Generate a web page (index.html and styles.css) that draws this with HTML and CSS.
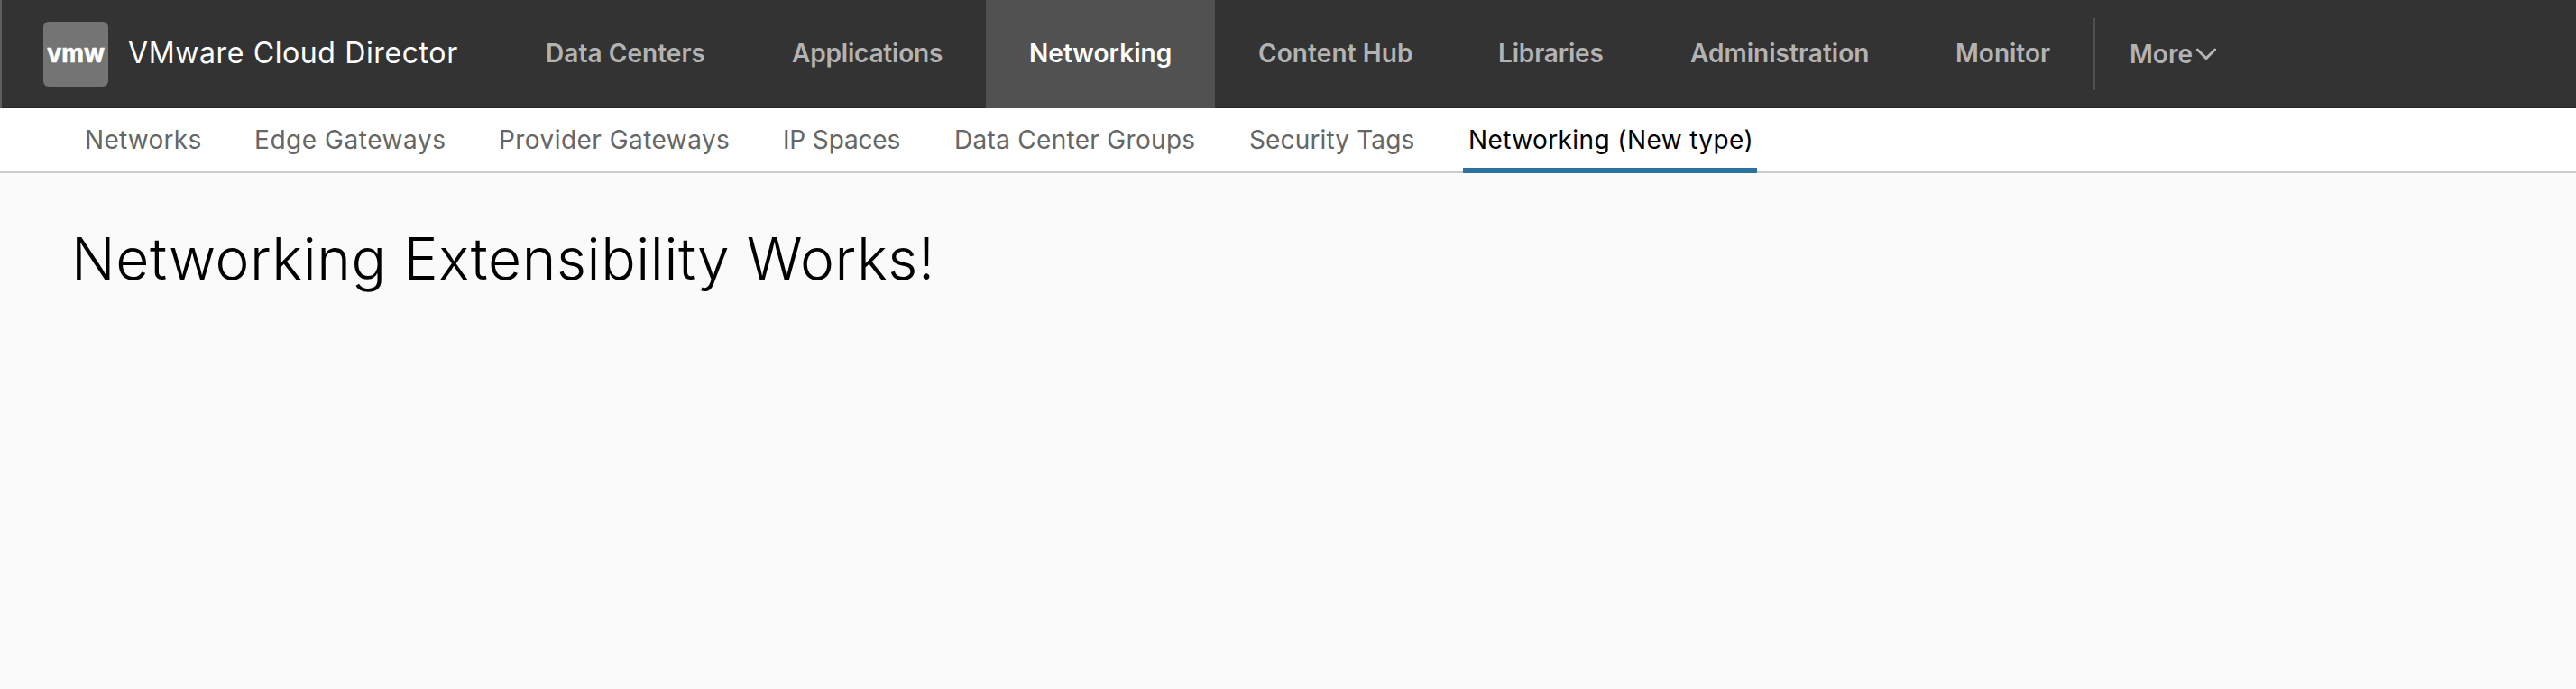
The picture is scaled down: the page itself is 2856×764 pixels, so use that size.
FILE: index.html
```html
<!DOCTYPE html>
<html lang="en">
<head>
<meta charset="utf-8">
<title>VMware Cloud Director</title>
<link rel="stylesheet" href="styles.css">
</head>
<body>
<header class="header">
  <a class="branding">
    <svg class="logo" viewBox="0 0 72 72" aria-hidden="true">
      <rect width="72" height="72" rx="6" fill="#747474"/>
      <text class="logo-text" x="4" y="44.6" textLength="64" lengthAdjust="spacingAndGlyphs">vmw</text>
    </svg>
    <span class="title">VMware Cloud Director</span>
  </a>
  <nav class="main-nav">
    <a class="nav-link data-centers">Data Centers</a>
    <a class="nav-link applications">Applications</a>
    <a class="nav-link networking active">Networking</a>
    <a class="nav-link content-hub">Content Hub</a>
    <a class="nav-link libraries">Libraries</a>
    <a class="nav-link administration">Administration</a>
    <a class="nav-link monitor">Monitor</a>
  </nav>
  <div class="more">
    <span>More</span>
    <svg class="chevron" viewBox="0 0 24 16" aria-hidden="true"><path d="M2.3 3 L12 12.6 L21.7 3"/></svg>
  </div>
</header>
<nav class="subnav">
  <a class="sub-link networks">Networks</a>
  <a class="sub-link edge">Edge Gateways</a>
  <a class="sub-link provider">Provider Gateways</a>
  <a class="sub-link ip-spaces">IP Spaces</a>
  <a class="sub-link groups">Data Center Groups</a>
  <a class="sub-link tags">Security Tags</a>
  <a class="sub-link new-type selected">Networking (New type)</a>
</nav>
<main class="content">
  <h1 class="heading">Networking Extensibility Works!</h1>
</main>
</body>
</html>
```
FILE: styles.css
```css
* { box-sizing: border-box; }
body {
  margin: 0;
  min-height: 764px;
  background: #fafafa;
  color: #000;
  font-family: Inter, "Liberation Sans", sans-serif;
  font-size: 28px;
  white-space: nowrap;
}

.header {
  display: flex;
  height: 120px;
  background: #333;
  border-left: 2px solid #5e5e5e;
  box-shadow: inset 0 -1px #2c292b;
}
.branding {
  display: flex;
  align-items: center;
  width: 555px;
  padding-left: 46px;
}
.logo { width: 72px; height: 72px; margin-right: 22px; flex: none; }
.logo-text {
  font-size: 29px;
  font-weight: 700;
  fill: #fff;
  stroke: #fff;
  stroke-width: 0.6;
  stroke-linejoin: round;
}
.title {
  color: #fff;
  font-size: 32px;
  line-height: 118px;
  padding-bottom: 2px;
  letter-spacing: 0.62px;
}

.main-nav { display: flex; }
.nav-link {
  padding-left: 48px;
  color: #b3b3b3;
  font-weight: 600;
  line-height: 119px;
}
.nav-link.active { background: #515151; color: #fff; }
.data-centers { width: 273px; letter-spacing: 0.05px; }
.applications { width: 263px; letter-spacing: -0.184px; }
.networking { width: 254px; letter-spacing: 0.05px; }
.content-hub { width: 266px; letter-spacing: 0.093px; }
.libraries { width: 213px; letter-spacing: -0.167px; }
.administration { width: 294px; letter-spacing: 0.032px; }
.monitor { width: 201px; }

.more {
  display: flex;
  align-items: center;
  height: 80px;
  margin-top: 20px;
  padding-left: 38px;
  border-left: 2px solid #515151;
  color: #b3b3b3;
  font-weight: 600;
  line-height: 78px;
}
.more span { padding-bottom: 1px; }
.chevron { width: 24px; height: 16px; margin-left: 3px; }
.chevron path {
  fill: none;
  stroke: #b3b3b3;
  stroke-width: 3;
  stroke-linecap: round;
}

.subnav {
  display: flex;
  gap: 48px;
  height: 72px;
  padding-left: 88px;
  background: #fff;
  box-shadow: inset 0 -2px #ccc;
}
.sub-link {
  padding-left: 6px;
  color: #666;
  line-height: 71px;
}
.sub-link.selected { color: #000; box-shadow: inset 0 -6px #2d719f; }
.networks { width: 140px; letter-spacing: 0.281px; }
.edge { width: 223px; letter-spacing: 0.55px; }
.provider { width: 267px; letter-spacing: 0.45px; }
.ip-spaces { width: 142px; letter-spacing: -0.15px; }
.groups { width: 279px; letter-spacing: 0.3px; }
.tags { width: 195px; letter-spacing: 0.139px; }
.new-type { width: 326px; letter-spacing: 0.4px; }

.content { padding: 55px 0 0 79px; }
.heading {
  margin: 0;
  font-size: 64px;
  font-weight: 300;
  line-height: 80px;
  letter-spacing: 0.62px;
}
```
